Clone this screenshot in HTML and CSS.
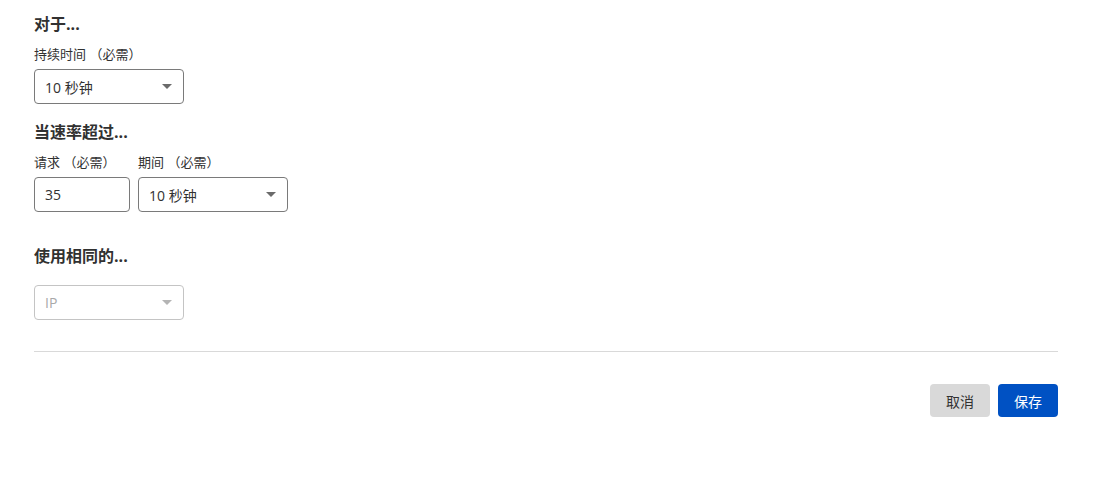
FILE: index.html
```html
<!DOCTYPE html>
<html lang="zh-CN">
<head>
    <meta charset="UTF-8">
    <meta name="viewport" content="width=device-width, initial-scale=1.0">
    <title>速率限制规则</title>
    <link rel="stylesheet" href="styles.css">
</head>
<body>
    <form class="rule-form">
        <section class="group">
            <h3>对于...</h3>
            <div class="field">
                <label>持续时间 <span class="req">（必需）</span></label>
                <div class="select wide">
                    <span>10 秒钟</span>
                    <i class="caret"></i>
                </div>
            </div>
        </section>

        <section class="group">
            <h3>当速率超过...</h3>
            <div class="row">
                <div class="field">
                    <label>请求 <span class="req">（必需）</span></label>
                    <input class="text-input" type="text" value="35">
                </div>
                <div class="field">
                    <label>期间 <span class="req">（必需）</span></label>
                    <div class="select wide">
                        <span>10 秒钟</span>
                        <i class="caret"></i>
                    </div>
                </div>
            </div>
        </section>

        <section class="group same">
            <h3>使用相同的...</h3>
            <div class="select wide disabled">
                <span>IP</span>
                <i class="caret"></i>
            </div>
        </section>

        <hr class="divider">

        <div class="actions">
            <button type="button" class="btn cancel">取消</button>
            <button type="button" class="btn save">保存</button>
        </div>
    </form>
</body>
</html>
```

FILE: styles.css
```css
body {
    margin: 0;
    font-family: "Open Sans", "Noto Sans CJK SC", sans-serif;
    color: #313131;
    background: #ffffff;
}
.rule-form {
    padding: 12px 62px 0 34px;
}
.group h3 {
    margin: 0 0 9px;
    font-size: 16px;
    font-weight: bold;
    color: #313131;
    line-height: 24px;
}
.group {
    margin-bottom: 16px;
}
.same {
    margin-top: 32px;
}
.same h3 {
    margin-bottom: 17px;
}
.field label {
    display: block;
    font-size: 13px;
    line-height: 18px;
    margin-bottom: 6px;
}
.row {
    display: flex;
    gap: 8px;
}
.select, .text-input {
    box-sizing: border-box;
    height: 35px;
    border: 1px solid #7a7a7a;
    border-radius: 4px;
    font-size: 14px;
    font-family: inherit;
    color: #313131;
    background: #fff;
}
.select {
    display: flex;
    align-items: center;
    justify-content: space-between;
    padding: 0 10px;
}
.wide {
    width: 150px;
}
.text-input {
    width: 96px;
    padding: 0 10px;
}
.caret {
    width: 0;
    height: 0;
    border-left: 5px solid transparent;
    border-right: 5px solid transparent;
    border-top: 5px solid #6b6b6b;
    margin-right: 1px;
}
.disabled {
    border-color: #c4c4c4;
    color: #a8a8a8;
}
.disabled .caret {
    border-top-color: #b4b4b4;
}
.divider {
    border: none;
    border-top: 1px solid #d9d9d9;
    margin: 31px 0 32px;
}
.actions {
    display: flex;
    justify-content: flex-end;
    gap: 8px;
}
.btn {
    width: 60px;
    height: 33px;
    border: none;
    border-radius: 4px;
    font-size: 14px;
    font-family: inherit;
    cursor: pointer;
}
.cancel {
    background: #d9d9d9;
    color: #313131;
}
.save {
    background: #0051c3;
    color: #ffffff;
}
```
